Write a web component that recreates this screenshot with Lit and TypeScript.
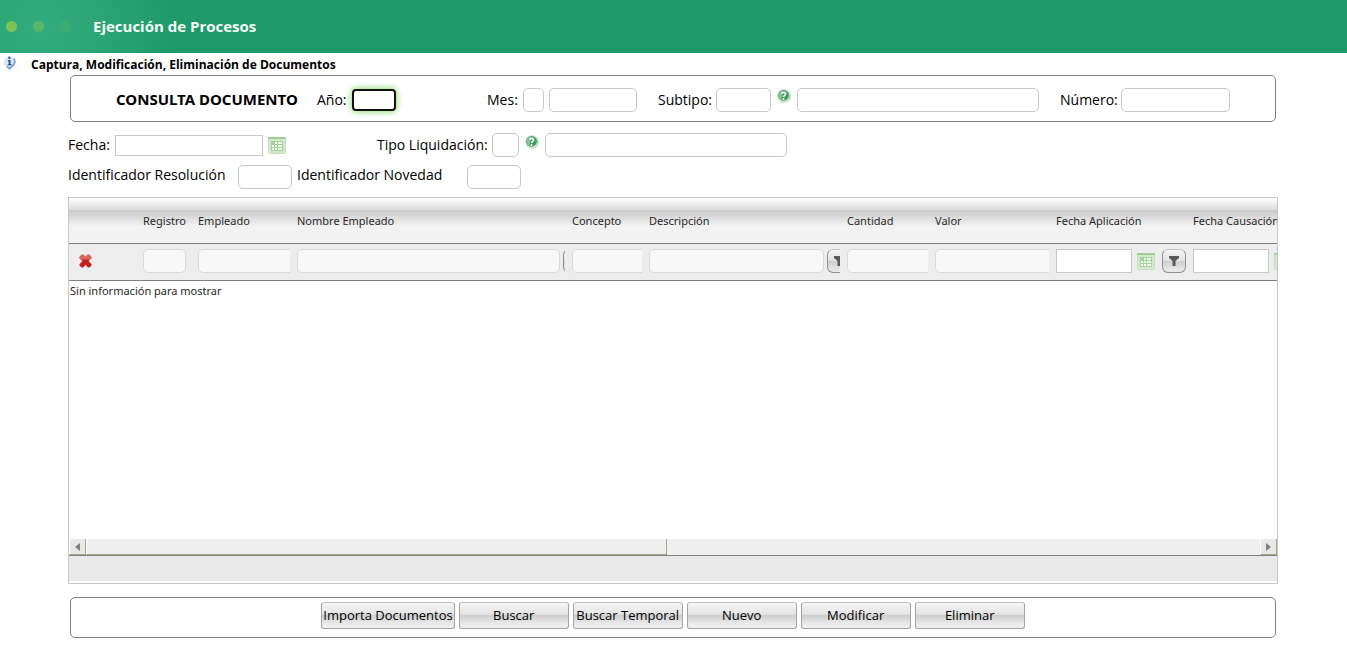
import { LitElement, html, css, svg, nothing } from "lit";
import { customElement } from "lit/decorators.js";

interface Column {
  title: string;
  width: number;
  field: number;
  kind: "none" | "text" | "date";
  filter?: boolean;
}

const COLUMNS: Column[] = [
  { title: "", width: 70, field: 0, kind: "none" },
  { title: "Registro", width: 55, field: 43, kind: "text" },
  { title: "Empleado", width: 99, field: 100, kind: "text" },
  { title: "Nombre Empleado", width: 275, field: 263, kind: "text", filter: true },
  { title: "Concepto", width: 77, field: 80, kind: "text" },
  { title: "Descripción", width: 198, field: 175, kind: "text", filter: true },
  { title: "Cantidad", width: 88, field: 100, kind: "text" },
  { title: "Valor", width: 121, field: 130, kind: "text" },
  { title: "Fecha Aplicación", width: 137, field: 76, kind: "date", filter: true },
  { title: "Fecha Causación", width: 137, field: 76, kind: "date", filter: true },
];

const ACTIONS = ["Buscar", "Buscar Temporal", "Nuevo", "Modificar", "Eliminar"];

const calendarIcon = html`<svg width="18" height="17" viewBox="0 0 18 17" aria-hidden="true">
  <rect x="0.5" y="0.5" width="17" height="16" rx="1" fill="#d3e9cb" stroke="#c6e0bd" />
  <rect x="0" y="0" width="18" height="2" fill="#a3cb97" />
  <rect x="3" y="4" width="12" height="10" fill="#a5d09a" />
  ${[0, 1, 2].map((r) =>
    [0, 1, 2, 3].map((c) =>
      r === 0 && c === 0 ? nothing : svg`<rect x=${4 + c * 3 - (c > 2 ? 1 : 0)} y=${5 + r * 3} width="2" height="2" fill="#f4fbf1" />`
    )
  )}
</svg>`;

const helpIcon = html`<svg width="14" height="16" viewBox="0 0 14 16" aria-hidden="true">
  <circle cx="7" cy="8" r="7" fill="#cfe8d4" />
  <path d="M10.500 2.500A7 7 0 0 1 5 14.500A7 7 0 0 0 13 9A7 7 0 0 0 10.500 2.500z" fill="#7cbd8d" />
  <circle cx="6.500" cy="7.300" r="5.400" fill="#429a60" />
  <path d="M1.500 7.300A5 5 0 0 1 6 2.200L4.500 12A5.500 5.500 0 0 1 1.500 7.300z" fill="#86c298" />
  <path d="M4.800 5.700C5 3.900 8.900 3.900 8.600 6C8.400 7.400 6.700 7.300 6.600 9" fill="none" stroke="#fff" stroke-width="1.600" />
  <circle cx="6.500" cy="11" r="1" fill="#fff" />
</svg>`;

const infoIcon = html`<svg width="13" height="14" viewBox="0 0 13 14" aria-hidden="true">
  <path d="M2 2.500C0 5 0.500 9 3.500 10.500L6.500 13.500L9.300 10.500C12.500 9 13 5 11 2.500L8.500 1.500H4z" fill="#dbe6f4" />
  <path d="M11 2.500C12.600 5.500 11.700 8.800 8.800 10.300L6.500 12.700L3.800 10.300" fill="none" stroke="#86a3cb" stroke-width="1.800" />
  <circle cx="6.400" cy="1.800" r="1.300" fill="#2458a8" />
  <path d="M4.800 4H7.500V8H8.600V9.200H4.700V8H5.600V5.200H4.800z" fill="#2458a8" />
</svg>`;

const funnelIcon = html`<svg width="10" height="10" viewBox="0 0 10 10" aria-hidden="true">
  <path d="M0 0H10V2L6.500 5V10H3.500V5L0 2z" fill="#5a5a5a" />
</svg>`;

const clearIcon = html`<svg width="13" height="14" viewBox="0 0 13 14" aria-hidden="true">
  <path d="M0.500 3L2.800 0.700H4.500L6.500 3L8.500 0.700H10.500L12.500 3V4.200L9.500 7L12.500 10.200V11.500L10.500 13.500H9L6.500 10.800L4 13.500H2.500L0.500 11.500V10.200L3.500 7L0.500 4.200z" fill="#c81e1a" />
  <path d="M0.500 3L2.800 0.700H4.500L6.500 3L8.500 0.700H10.500L12.500 3V4.200L11 5.500H2L0.500 4.200z" fill="#d9655f" />
</svg>`;

@customElement("app-root")
export class AppRoot extends LitElement {
  static styles = css`
    :host {
      display: block;
      background: #fff;
      color: #000;
      font-family: "Open Sans", "Noto Sans", sans-serif;
      font-size: 14px;
      line-height: 20px;
    }
    *, *::before, *::after { box-sizing: border-box; }
    button, input { font: inherit; margin: 0; }
    svg { display: block; }
    .banner {
      display: flex;
      align-items: center;
      height: 53px;
      padding-left: 6px;
      background: radial-gradient(circle at 40px 26px, #33ac7d 0, #2ea677 50px, #1e9969 135px);
    }
    .dots { display: flex; gap: 16px; width: 87px; }
    .dot { width: 11px; height: 11px; border-radius: 50%; background: #7cc358; }
    .dot.mid { background: #59b768; }
    .dot.dim { background: #3bad73; }
    .app-name { margin: 0; padding-bottom: 2px; color: #f4fff8; font-size: 15px; font-weight: bold; }
    .title-row { display: flex; align-items: center; gap: 15px; height: 22px; padding: 1px 0 0 3px; }
    .title { margin: 0; font-size: 12px; font-weight: bold; }
    .info { border: 0; padding: 0 0 4px; background: none; }
    .content { margin: 0 69px 0 68px; }
    .panel { margin: 0 2px; border: 1px solid #808080; border-radius: 5px; }
    .query { display: flex; align-items: center; height: 47px; padding: 2px 45px 0; }
    .query-title {
      width: 201px;
      margin: 0;
      padding-bottom: 2px;
      font-family: "Noto Sans", sans-serif;
      font-size: 15px;
      font-weight: bold;
      white-space: nowrap;
    }
    .line { display: flex; align-items: center; }
    .line.first { margin-top: 11px; height: 24px; }
    .line.second { margin-top: 8px; height: 24px; }
    .second label { align-self: start; }
    label { white-space: nowrap; flex: none; }
    .box {
      flex: none;
      height: 24px;
      padding: 0 5px;
      border: 1px solid #c8c8c8;
      border-radius: 5px;
      background: #fff;
      outline: none;
    }
    .box.square { border-radius: 0; height: 21px; }
    .box.active { height: 22px; border: 2px solid #101010; border-radius: 4px; box-shadow: 0 0 6px 1px #8fdc74; }
    .w21 { width: 21px; padding: 0; } .w27 { width: 27px; } .w44 { width: 44px; } .w54 { width: 54px; } .w55 { width: 55px; }
    .w88 { width: 88px; } .w109 { width: 109px; } .w148 { width: 148px; } .w242 { width: 242px; }
    .l35 { width: 35px; } .l36 { width: 36px; } .l47 { width: 47px; } .l58 { width: 58px; }
    .l61 { width: 61px; } .l115 { width: 115px; } .l170 { width: 170px; }
    .gap-s { margin-left: 5px; } .gap-m { margin-left: 21px; } .gap-l { margin-left: 91px; }
    .icon { flex: none; border: 0; padding: 0; background: none; }
    .help { margin: 0 6px; padding-bottom: 7px; }
    .cal { margin-left: 5px; }
    .grid {
      margin-top: 8px;
      border: 1px solid #c8c8c8;
      padding-bottom: 2px;
      font-family: "Noto Sans", sans-serif;
      font-size: 11px;
      color: #282828;
    }
    .viewport { overflow: hidden; min-height: 341px; }
    table { border-collapse: separate; border-spacing: 0; table-layout: fixed; width: 1257px; }
    th {
      height: 46px;
      padding: 0 3px 0 4px;
      border-bottom: 1px solid #808080;
      text-align: left;
      font-weight: normal;
      white-space: nowrap;
      background: linear-gradient(#fff 0, #dcdcdc 12px, #c9c9c9 12px, #f2f2f2 28px);
    }
    .filters td { height: 37px; padding: 0 3px 2px 4px; border-bottom: 1px solid #808080; background: #ededed; }
    .cell { display: flex; align-items: center; overflow: hidden; }
    .cell .box { background: #f8f8f8; border-color: #dadada; }
    .cell .box.date { background: #fff; border-color: #c8c8c8; border-radius: 0; }
    .funnel {
      display: flex;
      flex: none;
      align-items: center;
      justify-content: center;
      width: 24px;
      height: 24px;
      margin-left: 3px;
      padding: 0;
      border: 1px solid #909090;
      border-top-color: #c4c4c4;
      border-radius: 6px;
      background: linear-gradient(#f4f4f4, #e2e2e2 50%, #cfcfcf 52%, #ededed);
    }
    .date ~ .funnel { margin-left: 7px; }
    .clear { margin-left: 6px; }
    .empty { padding: 0 1px; line-height: 20px; }
    .scroll { display: flex; height: 17px; border-bottom: 1px solid #808080; background: #efefef; }
    .arrow {
      width: 17px;
      flex: none;
      padding: 0;
      border: 0;
      border-left: 1px solid #fff;
      border-right: 1px solid #9bab83;
      border-bottom: 1px solid #9bab83;
      background: #e8e8e8;
      display: flex;
      align-items: center;
      justify-content: center;
    }
    .track { flex: 1; display: flex; }
    .thumb { width: 49.5%; border-left: 1px solid #fff; border-right: 1px solid #9bab83; border-bottom: 1px solid #9bab83; }
    .foot { height: 25px; background: #e9e9e9; }
    .actions { display: flex; justify-content: center; gap: 4px; height: 41px; margin-top: 13px; padding: 4px; }
    .action {
      min-width: 110px;
      height: 27px;
      padding: 0 1px 2px;
      border: 1px solid #a4a4a4;
      border-top-color: #c4c4c4;
      border-radius: 3px;
      font-size: 13px;
      line-height: 18px;
      white-space: nowrap;
      color: #000;
      background: linear-gradient(#f6f6f6, #e4e4e4 45%, #cecece 50%, #e8e8e8 80%, #f0f0f0);
    }
  `;

  firstUpdated() {
    this.renderRoot.querySelector<HTMLInputElement>("#anio")?.focus();
  }

  private filterCell(c: Column) {
    if (c.kind === "none") {
      return html`<button class="icon clear" aria-label="Limpiar filtros">${clearIcon}</button>`;
    }
    return html`
      <input class="box ${c.kind === "date" ? "date" : ""}" style="width:${c.field}px" aria-label=${c.title} />
      ${c.kind === "date" ? html`<button class="icon cal date" aria-label="Calendario">${calendarIcon}</button>` : nothing}
      ${c.filter ? html`<button class="funnel" aria-label="Filtrar">${funnelIcon}</button>` : nothing}
    `;
  }

  render() {
    return html`
      <header class="banner">
        <div class="dots"><span class="dot"></span><span class="dot mid"></span><span class="dot dim"></span></div>
        <h1 class="app-name">Ejecución de Procesos</h1>
      </header>
      <div class="title-row">
        <button class="info" aria-label="Información">${infoIcon}</button>
        <h2 class="title">Captura, Modificación, Eliminación de Documentos</h2>
      </div>
      <main class="content">
        <section class="panel query">
          <h3 class="query-title">CONSULTA DOCUMENTO</h3>
          <label class="l35" for="anio">Año:</label><input id="anio" class="box active w44" />
          <label class="l36 gap-l" for="mes">Mes:</label><input id="mes" class="box w21" />
          <input class="box w88 gap-s" aria-label="Nombre del mes" />
          <label class="l58 gap-m" for="subtipo">Subtipo:</label><input id="subtipo" class="box w55" />
          <button class="icon help" aria-label="Ayuda subtipo">${helpIcon}</button>
          <input class="box w242" aria-label="Nombre del subtipo" />
          <label class="l61 gap-m" for="numero">Número:</label><input id="numero" class="box w109" />
        </section>
        <div class="line first">
          <label class="l47" for="fecha">Fecha:</label><input id="fecha" class="box square w148" />
          <button class="icon cal" aria-label="Calendario">${calendarIcon}</button>
          <label class="l115 gap-l" for="tipo">Tipo Liquidación:</label><input id="tipo" class="box w27" />
          <button class="icon help" aria-label="Ayuda tipo">${helpIcon}</button>
          <input class="box w242" aria-label="Nombre del tipo" />
        </div>
        <div class="line second">
          <label class="l170" for="resolucion">Identificador Resolución</label><input id="resolucion" class="box w54" />
          <label class="l170 gap-s" for="novedad">Identificador Novedad</label><input id="novedad" class="box w54" />
        </div>
        <section class="grid">
          <div class="viewport">
            <table>
              <colgroup>${COLUMNS.map((c) => html`<col style="width:${c.width}px" />`)}</colgroup>
              <thead>
                <tr>${COLUMNS.map((c) => html`<th scope="col">${c.title}</th>`)}</tr>
              </thead>
              <tbody>
                <tr class="filters">${COLUMNS.map((c) => html`<td><div class="cell">${this.filterCell(c)}</div></td>`)}</tr>
                <tr><td class="empty" colspan=${COLUMNS.length}>Sin información para mostrar</td></tr>
              </tbody>
            </table>
          </div>
          <div class="scroll">
            <button class="arrow" aria-label="Izquierda"><svg width="5" height="8" viewBox="0 0 5 8"><path d="M5 0V8L0 4z" fill="#808080" /></svg></button>
            <div class="track"><div class="thumb"></div></div>
            <button class="arrow" aria-label="Derecha"><svg width="5" height="8" viewBox="0 0 5 8"><path d="M0 0V8L5 4z" fill="#808080" /></svg></button>
          </div>
          <div class="foot"></div>
        </section>
        <section class="panel actions">
          <button class="action">Importa Documentos</button>
          ${ACTIONS.map((a) => html`<button class="action">${a}</button>`)}
        </section>
      </main>
    `;
  }
}
